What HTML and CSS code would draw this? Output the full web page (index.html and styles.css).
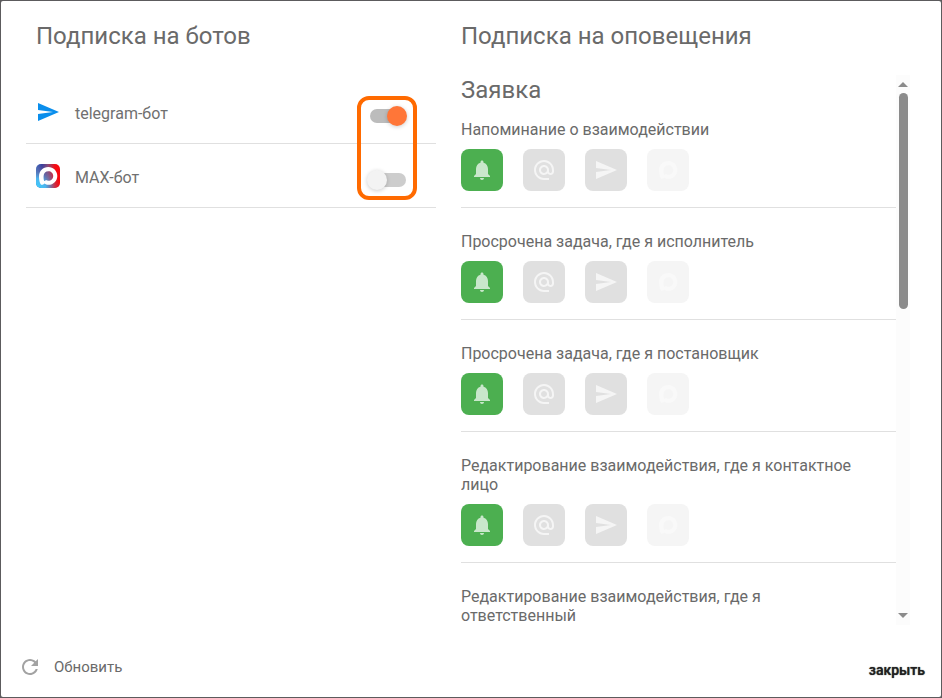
FILE: index.html
```html
<!DOCTYPE html>
<html lang="ru">
<head>
  <meta charset="UTF-8">
  <title>Подписка на оповещения</title>
  <meta name="viewport" content="width=device-width, initial-scale=1">
  <link rel="stylesheet" href="styles.css">
</head>
<body>

<svg class="sprite" aria-hidden="true">
  <symbol id="icon-bell" viewBox="0 0 24 24">
    <path d="M12 22c1.1 0 2-.9 2-2h-4c0 1.100.9 2 2 2zm6-6v-5c0-3.070-1.640-5.640-4.500-6.320V4c0-.83-.67-1.500-1.500-1.500s-1.500.67-1.500 1.500v.68C7.630 5.360 6 7.920 6 11v5l-2 2v1h16v-1l-2-2z"/>
  </symbol>
  <symbol id="icon-mail" viewBox="0 0 24 24">
    <path d="M12 2C6.480 2 2 6.480 2 12s4.480 10 10 10h5v-2h-5c-4.340 0-8-3.660-8-8s3.660-8 8-8 8 3.660 8 8v1.430c0 .79-.71 1.570-1.500 1.570s-1.500-.78-1.500-1.570V12c0-2.760-2.240-5-5-5s-5 2.240-5 5 2.240 5 5 5c1.380 0 2.640-.56 3.540-1.470.65.89 1.770 1.470 2.960 1.470 1.970 0 3.500-1.600 3.500-3.570V12c0-5.520-4.480-10-10-10zm0 13c-1.660 0-3-1.340-3-3s1.340-3 3-3 3 1.340 3 3-1.340 3-3 3z"/>
  </symbol>
  <symbol id="icon-send" viewBox="0 0 24 24">
    <path d="M2.010 21L23 12 2.010 3 2 10l15 2-15 2z"/>
  </symbol>
  <symbol id="icon-max" viewBox="0 0 24 24">
    <path fill-rule="evenodd" d="M12.300 3C7 3 3 7 3 12.400c0 3.300.9 8.400 2.800 8.400 1 0 2-.8 2.700-1.400 1.100.9 2.300 1.400 3.900 1.400 5 0 8.900-4 8.900-8.900S17.300 3 12.300 3zm.1 4.200c2.700 0 4.800 2.100 4.800 4.800s-2.100 4.800-4.800 4.800c-.9 0-1.700-.2-2.400-.7-.6.5-1.300 1-1.800.9-.5-1-.7-3-.6-5 .1-2.800 2.100-4.800 4.800-4.800z"/>
  </symbol>
  <symbol id="icon-refresh" viewBox="0 0 24 24">
    <path d="M17.650 6.350C16.200 4.900 14.210 4 12 4c-4.420 0-7.990 3.580-7.990 8s3.570 8 7.990 8c3.730 0 6.840-2.550 7.730-6h-2.080c-.82 2.330-3.040 4-5.650 4-3.310 0-6-2.690-6-6s2.690-6 6-6c1.660 0 3.140.69 4.220 1.780L13 11h7V4l-2.350 2.350z"/>
  </symbol>
</svg>

<div class="dialog" role="dialog" aria-label="Подписка">
  <div class="columns">

    <section class="bots">
      <h2>Подписка на ботов</h2>
      <div class="bot-list">
        <div class="bot">
          <svg class="bot-icon telegram"><use href="#icon-send"/></svg>
          <label for="bot-telegram">telegram-бот</label>
          <input type="checkbox" class="switch" id="bot-telegram" checked>
        </div>
        <div class="bot">
          <svg class="bot-icon" viewBox="0 0 24 24">
            <defs>
              <linearGradient id="max-side" x1="0" y1="0" x2="1" y2="0">
                <stop offset="0" stop-color="#3f6fc0"/>
                <stop offset=".25" stop-color="#3a3f9c"/>
                <stop offset=".5" stop-color="#8a4a78"/>
                <stop offset=".8" stop-color="#f80a10"/>
              </linearGradient>
              <radialGradient id="max-corner" cx="0" cy="1" r="1">
                <stop offset="0" stop-color="#3cd0ff"/>
                <stop offset=".4" stop-color="#4cb4ee"/>
                <stop offset=".7" stop-color="#6a80b8" stop-opacity=".5"/>
                <stop offset="1" stop-color="#7a5a90" stop-opacity="0"/>
              </radialGradient>
            </defs>
            <rect width="24" height="24" rx="5" fill="url(#max-side)"/>
            <rect width="24" height="24" rx="5" fill="url(#max-corner)"/>
            <use href="#icon-max" fill="#fff"/>
          </svg>
          <label for="bot-max">MAX-бот</label>
          <input type="checkbox" class="switch" id="bot-max">
        </div>
        <div class="highlight"></div>
      </div>
    </section>

    <section class="alerts">
      <h2>Подписка на оповещения</h2>
      <div class="scroll-area">
        <div class="alert-list">
          <h3>Заявка</h3>

          <div class="alert">
            <p>Напоминание о взаимодействии</p>
            <div class="channels">
              <button class="channel on" aria-label="Уведомление"><svg><use href="#icon-bell"/></svg></button>
              <button class="channel" aria-label="Почта"><svg><use href="#icon-mail"/></svg></button>
              <button class="channel" aria-label="Telegram"><svg><use href="#icon-send"/></svg></button>
              <button class="channel" aria-label="MAX" disabled><svg><use href="#icon-max"/></svg></button>
            </div>
          </div>

          <div class="alert">
            <p>Просрочена задача, где я исполнитель</p>
            <div class="channels">
              <button class="channel on" aria-label="Уведомление"><svg><use href="#icon-bell"/></svg></button>
              <button class="channel" aria-label="Почта"><svg><use href="#icon-mail"/></svg></button>
              <button class="channel" aria-label="Telegram"><svg><use href="#icon-send"/></svg></button>
              <button class="channel" aria-label="MAX" disabled><svg><use href="#icon-max"/></svg></button>
            </div>
          </div>

          <div class="alert">
            <p>Просрочена задача, где я постановщик</p>
            <div class="channels">
              <button class="channel on" aria-label="Уведомление"><svg><use href="#icon-bell"/></svg></button>
              <button class="channel" aria-label="Почта"><svg><use href="#icon-mail"/></svg></button>
              <button class="channel" aria-label="Telegram"><svg><use href="#icon-send"/></svg></button>
              <button class="channel" aria-label="MAX" disabled><svg><use href="#icon-max"/></svg></button>
            </div>
          </div>

          <div class="alert">
            <p>Редактирование взаимодействия, где я контактное лицо</p>
            <div class="channels">
              <button class="channel on" aria-label="Уведомление"><svg><use href="#icon-bell"/></svg></button>
              <button class="channel" aria-label="Почта"><svg><use href="#icon-mail"/></svg></button>
              <button class="channel" aria-label="Telegram"><svg><use href="#icon-send"/></svg></button>
              <button class="channel" aria-label="MAX" disabled><svg><use href="#icon-max"/></svg></button>
            </div>
          </div>

          <div class="alert">
            <p>Редактирование взаимодействия, где я ответственный</p>
          </div>
        </div>

        <div class="scrollbar" aria-hidden="true">
          <span class="arrow up"></span>
          <div class="track"><div class="thumb"></div></div>
          <span class="arrow down"></span>
        </div>
      </div>
    </section>

  </div>

  <footer>
    <button class="refresh"><svg><use href="#icon-refresh"/></svg>Обновить</button>
    <button class="close">закрыть</button>
  </footer>
</div>

</body>
</html>
```
FILE: styles.css
```css
* {
  box-sizing: border-box;
}
body {
  margin: 0;
  height: 100vh;
  padding: 1px;
  background: #5c5b5d;
  color: #6a6a6a;
  font-family: Roboto, sans-serif;
  font-size: 16px;
  line-height: 19px;
}
h2, h3, p {
  margin: 0;
}
h2, h3 {
  font-size: 24px;
  line-height: 28px;
  font-weight: 400;
}
button {
  border: none;
  padding: 0;
  background: none;
  color: inherit;
  font: inherit;
  cursor: pointer;
}
svg {
  display: block;
  width: 24px;
  height: 24px;
  fill: currentColor;
}
.sprite {
  position: absolute;
  width: 0;
  height: 0;
}
.dialog {
  display: flex;
  flex-direction: column;
  height: 100%;
  background: #fff;
  border-radius: 2px;
}
.columns {
  flex: 1;
  min-height: 0;
  display: grid;
  grid-template-columns: 21fr 23fr;
  grid-template-rows: minmax(0, 1fr);
  gap: 25px;
  padding: 21px 31px 0 25px;
}

/* bots */
.bots h2 {
  padding-left: 10px;
  margin-bottom: 30px;
}
.bot-list {
  position: relative;
}
.bot {
  display: flex;
  align-items: center;
  gap: 15px;
  height: 64px;
  padding: 0 30px 0 10px;
  border-bottom: 1px solid #e0e0e0;
}
.bot label {
  flex: 1;
  padding-top: 3px;
  color: #707070;
}
.telegram {
  color: #0a8eec;
}
.switch {
  appearance: none;
  display: flex;
  align-items: center;
  width: 36px;
  height: 14px;
  margin: 8px 0 0;
  border-radius: 7px;
  background: #cdcdcd;
  cursor: pointer;
}
.switch::before {
  content: "";
  width: 20px;
  height: 20px;
  margin: 0 -1px 0 -3px;
  flex: none;
  border-radius: 50%;
  background: #f3f3f3;
  box-shadow: 0 1px 4px rgba(0, 0, 0, .2);
}
.switch:checked {
  justify-content: flex-end;
  background: #bcbcbc;
}
.switch:checked::before {
  background: #ff7638;
}
.highlight {
  position: absolute;
  top: 16px;
  right: 19px;
  bottom: 8px;
  width: 60px;
  border: 4px solid #ff6a00;
  border-radius: 12px;
  pointer-events: none;
}

/* alerts */
.alerts {
  display: flex;
  flex-direction: column;
}
.alerts h2 {
  margin-bottom: 25px;
}
.scroll-area {
  flex: 1;
  min-height: 0;
  display: flex;
}
.alert-list {
  flex: 1;
  padding-top: 1px;
  overflow-y: auto;
  scrollbar-width: none;
}
.alert-list h3 {
  margin-bottom: 16px;
}
.alert {
  padding-bottom: 16px;
  margin-bottom: 24px;
  border-bottom: 1px solid #e0e0e0;
}
.alert p {
  padding-right: 40px;
}
.channels {
  display: flex;
  gap: 20px;
  margin-top: 10px;
}
.channel {
  display: flex;
  align-items: center;
  justify-content: center;
  width: 42px;
  height: 42px;
  border-radius: 8px;
  background: #e0e0e0;
  color: #f5f5f5;
}
.channel.on {
  background: #4caf50;
  color: #c9e7cb;
}
.channel:disabled {
  background: #f5f5f5;
  color: #f9f9f9;
  cursor: default;
}
.scrollbar {
  display: flex;
  flex-direction: column;
  align-items: center;
  width: 14px;
  padding: 7px 0;
  background: #fcfcfc;
}
.arrow {
  border: 5px solid transparent;
}
.arrow.up {
  border-top: none;
  border-bottom-color: #8b8b8b;
}
.arrow.down {
  border-bottom: none;
  border-top-color: #8b8b8b;
}
.track {
  flex: 1;
  width: 9px;
  padding: 6px 0;
}
.thumb {
  height: 42%;
  border-radius: 5px;
  background: #8b8b8b;
}

/* footer */
footer {
  display: flex;
  align-items: center;
  justify-content: space-between;
  height: 72px;
  padding: 12px 16px 0 17px;
}
.refresh {
  display: flex;
  align-items: center;
  gap: 12px;
  font-size: 15px;
}
.refresh svg {
  color: #a3a3a3;
}
.close {
  padding-top: 6px;
  color: #212121;
  font-size: 14px;
  font-weight: 500;
  text-shadow: 0 0 1px #212121;
}
```
